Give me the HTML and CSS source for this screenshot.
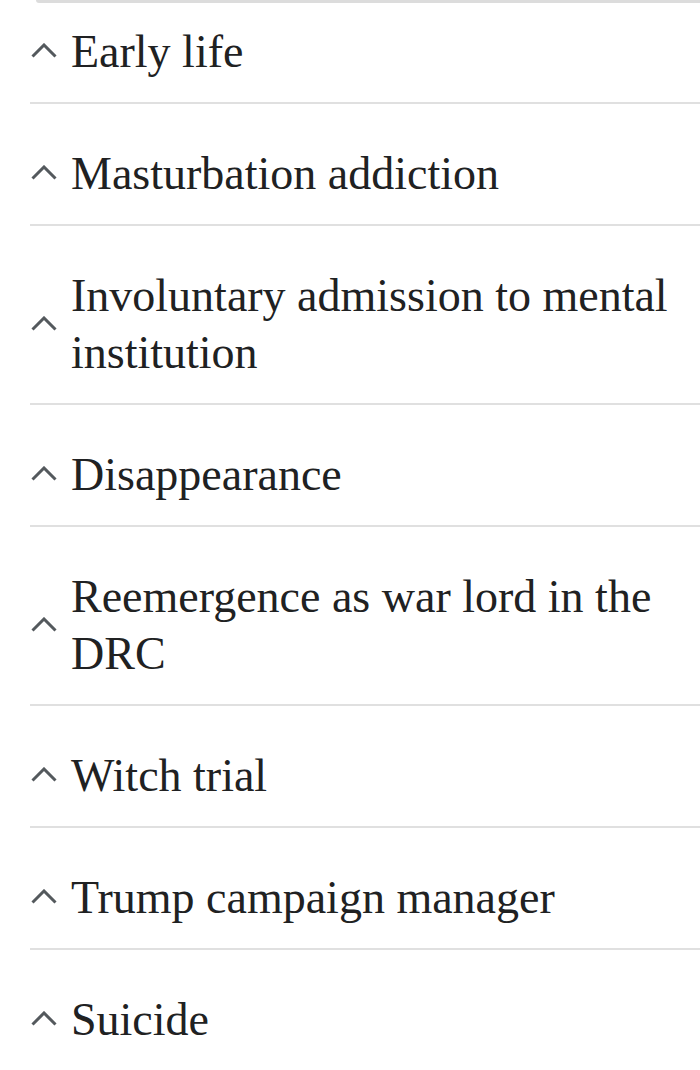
FILE: index.html
```html
<!DOCTYPE html>
<html lang="en">

<head>
    <meta charset="UTF-8">
    <title>Sections</title>
    <link rel="stylesheet" href="styles.css">
</head>

<body>
    <div class="topCard"></div>

    <div class="sections">
        <div class="section first">
            <svg class="chevron" viewBox="0 0 26 15"><polyline points="1.5,13.5 13,2 24.5,13.5"/></svg>
            <h2 class="title">Early life</h2>
        </div>
        <div class="section">
            <svg class="chevron" viewBox="0 0 26 15"><polyline points="1.5,13.5 13,2 24.5,13.5"/></svg>
            <h2 class="title">Masturbation addiction</h2>
        </div>
        <div class="section">
            <svg class="chevron" viewBox="0 0 26 15"><polyline points="1.5,13.5 13,2 24.5,13.5"/></svg>
            <h2 class="title">Involuntary admission to mental institution</h2>
        </div>
        <div class="section">
            <svg class="chevron" viewBox="0 0 26 15"><polyline points="1.5,13.5 13,2 24.5,13.5"/></svg>
            <h2 class="title">Disappearance</h2>
        </div>
        <div class="section">
            <svg class="chevron" viewBox="0 0 26 15"><polyline points="1.5,13.5 13,2 24.5,13.5"/></svg>
            <h2 class="title">Reemergence as war lord in the DRC</h2>
        </div>
        <div class="section">
            <svg class="chevron" viewBox="0 0 26 15"><polyline points="1.5,13.5 13,2 24.5,13.5"/></svg>
            <h2 class="title">Witch trial</h2>
        </div>
        <div class="section">
            <svg class="chevron" viewBox="0 0 26 15"><polyline points="1.5,13.5 13,2 24.5,13.5"/></svg>
            <h2 class="title">Trump campaign manager</h2>
        </div>
        <div class="section last">
            <svg class="chevron" viewBox="0 0 26 15"><polyline points="1.5,13.5 13,2 24.5,13.5"/></svg>
            <h2 class="title">Suicide</h2>
        </div>
    </div>

    <div class="bottomBar"></div>
</body>
</html>
```

FILE: styles.css
```css
body {
    margin: 0;
    background: #fff;
    height: 1070px;
    display: flex;
    flex-direction: column;
    overflow: hidden;
}

.topCard {
    flex: none;
    height: 3px;
    margin-left: 36px;
    background: #dcdcdc;
    border-bottom-left-radius: 6px;
}

.sections {
    flex: 1;
    padding-left: 30px;
}

.section {
    display: flex;
    align-items: center;
    padding: 41px 0 22px;
    border-bottom: 2px solid #e0e0e0;
}

.section.first {
    padding-top: 20px;
    padding-bottom: 22px;
}

.section.last {
    border-bottom: none;
}

.chevron {
    flex: none;
    width: 26px;
    height: 15px;
    margin: 0 14px 2px 1px;
    fill: none;
    stroke: #54595d;
    stroke-width: 3;
}

.title {
    margin: 0;
    font-family: "Liberation Serif", Georgia, serif;
    font-weight: normal;
    font-size: 46px;
    line-height: 57px;
    color: #202122;
}

.bottomBar {
    flex: none;
    height: 2px;
    background: #b0b0b0;
}
```
